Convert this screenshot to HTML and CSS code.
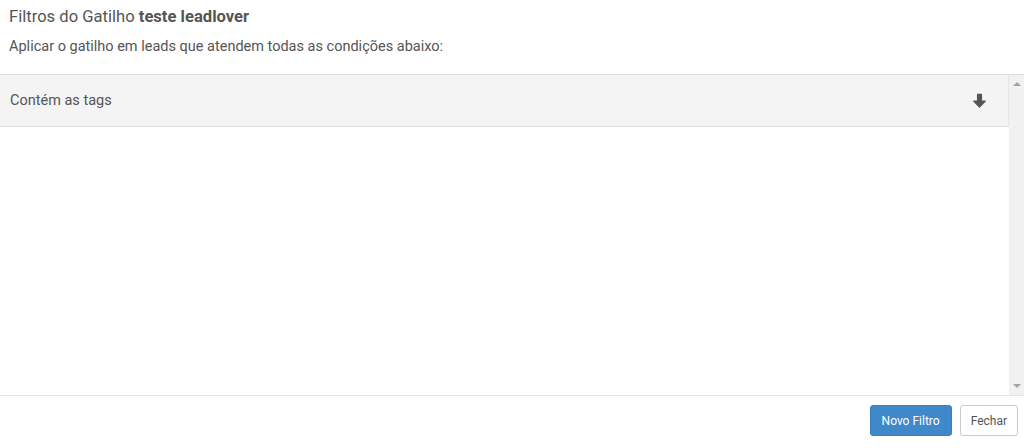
FILE: index.html
```html
<!DOCTYPE html>
<html lang="pt-BR">
<head>
    <meta charset="UTF-8">
    <title>Filtros do Gatilho</title>
    <link rel="stylesheet" href="styles.css">
</head>
<body>
    <div class="modal">
        <header class="modal-header">
            <h4>Filtros do Gatilho <b>teste leadlover</b></h4>
            <p>Aplicar o gatilho em leads que atendem todas as condições abaixo:</p>
        </header>
        <div class="modal-body">
            <div class="filters">
                <div class="filter-row">
                    <span>Contém as tags</span>
                    <svg class="arrow" width="15" height="16" viewBox="0 0 15 16">
                        <path d="M5.6 1.5h3.8v6.6h3.9L7.5 14 1.7 8.1h3.9z" fill="#555" stroke="#555" stroke-width="1.3" stroke-linejoin="round"/>
                    </svg>
                </div>
            </div>
            <div class="scrollbar">
                <span class="scroll-up"></span>
                <span class="scroll-down"></span>
            </div>
        </div>
        <footer class="modal-footer">
            <button class="btn btn-primary">Novo Filtro</button>
            <button class="btn btn-default">Fechar</button>
        </footer>
    </div>
</body>
</html>
```

FILE: styles.css
```css
body {
    margin: 0;
    font-family: Roboto, 'Liberation Sans', sans-serif;
    color: #555;
    background-color: #fff;
}

.modal-header {
    padding: 7px 9px 0;
    height: 74px;
    box-sizing: border-box;
}

.modal-header h4 {
    margin: 0;
    font-size: 16.6px;
    font-weight: normal;
    line-height: 20px;
}

.modal-header h4 b {
    font-weight: bold;
}

.modal-header p {
    margin: 10px 0 0;
    font-size: 14.5px;
    line-height: 20px;
}

.modal-body {
    display: flex;
    height: 321px;
    border-top: 1px solid #ddd;
    box-sizing: border-box;
}

.filters {
    flex: 1;
}

.filter-row {
    display: flex;
    align-items: center;
    justify-content: space-between;
    height: 51px;
    padding: 0 21px 0 10px;
    background-color: #f4f4f4;
    border-right: 1px solid #e6e6e6;
    border-bottom: 1px solid #ddd;
    font-size: 14.5px;
}

.scrollbar {
    display: flex;
    flex-direction: column;
    justify-content: space-between;
    align-items: center;
    width: 15px;
    padding: 7px 0 7px 1px;
    background-color: #f1f1f1;
    box-sizing: border-box;
}

.scroll-up, .scroll-down {
    width: 0;
    height: 0;
    border-left: 4px solid transparent;
    border-right: 4px solid transparent;
}

.scroll-up {
    border-bottom: 4px solid #a3a3a3;
}

.scroll-down {
    border-top: 4px solid #a3a3a3;
}

.modal-footer {
    display: flex;
    justify-content: flex-end;
    gap: 8px;
    padding: 9px 6px;
    border-top: 1px solid #e5e5e5;
}

.btn {
    height: 31px;
    padding: 0 11px;
    font-family: inherit;
    font-size: 12px;
    border-radius: 3px;
    cursor: pointer;
}

.btn-primary {
    color: #fff;
    background-color: #3f88c9;
    border: 1px solid #3a80bf;
}

.btn-default {
    padding: 0 10px;
    color: #555;
    background-color: #fff;
    border: 1px solid #ccc;
}
```
